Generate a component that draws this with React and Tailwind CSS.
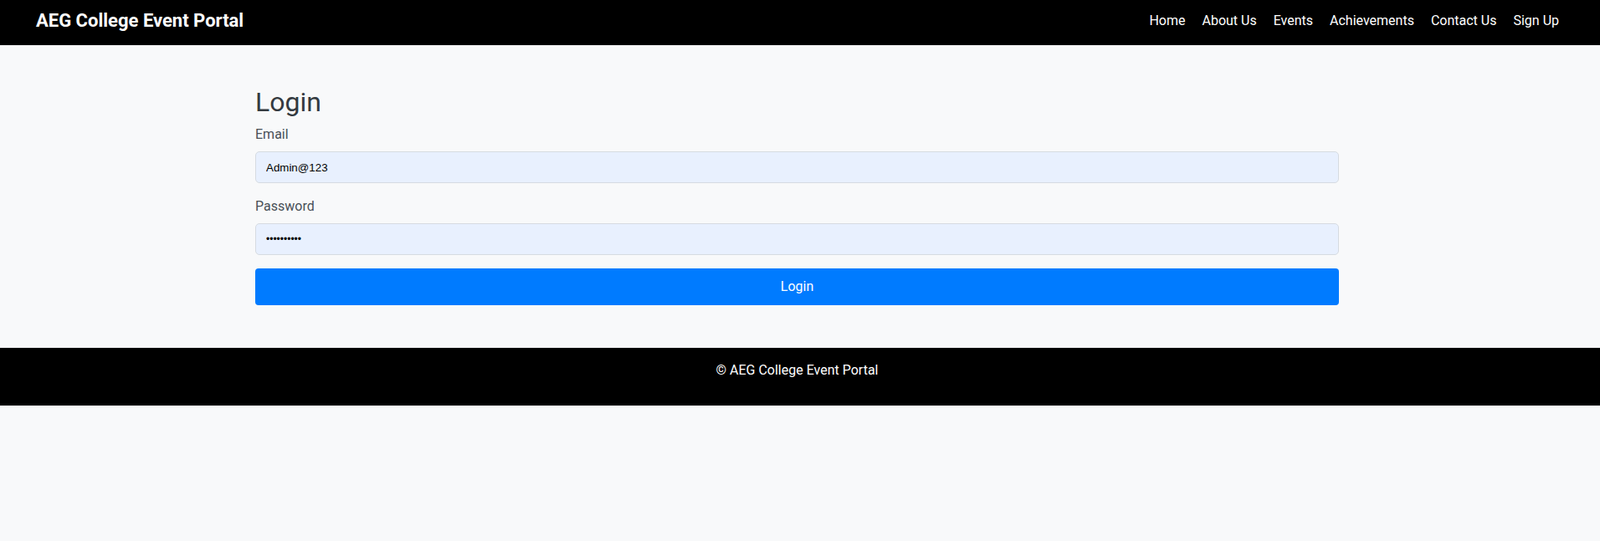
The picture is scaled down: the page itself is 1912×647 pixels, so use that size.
import React from "react";

export default function App() {
  const links = ["Home", "About Us", "Events", "Achievements", "Contact Us", "Sign Up"];
  return (
    <div className="min-h-[647px] bg-[#f8f9fa]" style={{ fontFamily: "Roboto, 'Liberation Sans', sans-serif" }}>
      <nav className="h-[54px] bg-black flex items-center justify-between pl-[43px] pr-[49px] pb-[5px]">
        <span className="text-white font-bold text-[22px] leading-[30px]">AEG College Event Portal</span>
        <ul className="flex items-center gap-[20px]">
          {links.map((l) => (
            <li key={l}>
              <a href="#" className="text-white text-[16px] leading-[24px]">{l}</a>
            </li>
          ))}
        </ul>
      </nav>

      <main className="pt-[49px] pb-[51px]">
        <div className="ml-[305px] w-[1295px]">
          <h2 className="text-[32px] leading-[38px] text-[#343a40] font-normal mb-[8px]">Login</h2>
          <div className="mb-[16px]">
            <label className="block text-[16px] leading-[24px] text-[#495057] mb-[8px]">Email</label>
            <input
              type="text"
              readOnly
              value="Admin@123"
              className="block w-full h-[38px] px-[12px] bg-[#e8f0fe] border border-[#d6dbe1] rounded-[5px] text-black text-[13.33px] outline-none"
              style={{ fontFamily: "'Liberation Sans', Arial, sans-serif" }}
            />
          </div>
          <div className="mb-[16px]">
            <label className="block text-[16px] leading-[24px] text-[#495057] mb-[8px]">Password</label>
            <input
              type="password"
              readOnly
              value="Admin@1234"
              className="block w-full h-[38px] px-[12px] bg-[#e8f0fe] border border-[#d6dbe1] rounded-[5px] text-black text-[12px] outline-none"
              style={{ fontFamily: "'Liberation Sans', Arial, sans-serif" }}
            />
          </div>
          <button className="block w-full h-[44px] bg-[#007bff] text-white text-[16px] rounded-[4px]">Login</button>
        </div>
      </main>

      <footer className="h-[69px] bg-black pt-[15px] pr-[7px] text-center">
        <p className="text-white text-[16px] leading-[24px]">© AEG College Event Portal</p>
      </footer>
    </div>
  );
}
